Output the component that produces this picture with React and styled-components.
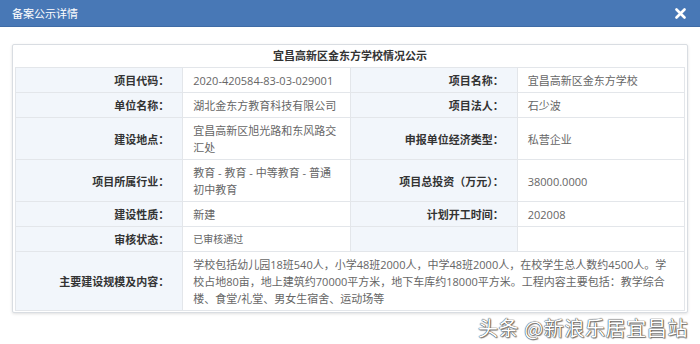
import React from "react";
import styled, { createGlobalStyle } from "styled-components";

const rows = [
  [
    { label: "项目代码：", value: "2020-420584-83-03-029001" },
    { label: "项目名称：", value: "宜昌高新区金东方学校" },
  ],
  [
    { label: "单位名称：", value: "湖北金东方教育科技有限公司" },
    { label: "项目法人：", value: "石少波" },
  ],
  [
    { label: "建设地点：", value: "宜昌高新区旭光路和东风路交汇处" },
    { label: "申报单位经济类型：", value: "私营企业" },
  ],
  [
    { label: "项目所属行业：", value: "教育 - 教育 - 中等教育 - 普通初中教育" },
    { label: "项目总投资（万元）：", value: "38000.0000" },
  ],
  [
    { label: "建设性质：", value: "新建" },
    { label: "计划开工时间：", value: "202008" },
  ],
  [
    { label: "审核状态：", value: "已审核通过", small: true },
    { label: "", value: "" },
  ],
];

const scope =
  "学校包括幼儿园18班540人，小学48班2000人，中学48班2000人，在校学生总人数约4500人。学校占地80亩，地上建筑约70000平方米，地下车库约18000平方米。工程内容主要包括：教学综合楼、食堂/礼堂、男女生宿舍、运动场等";

export default function App() {
  return (
    <Page>
      <GlobalStyle />
      <TitleBar>
        <TitleText>备案公示详情</TitleText>
        <CloseButton>
          <svg width="11" height="11" viewBox="0 0 11 11">
            <path d="M1.5 1.5 L9.5 9.5 M9.5 1.5 L1.5 9.5" stroke="#fff" strokeWidth="2.6" strokeLinecap="round" />
          </svg>
        </CloseButton>
      </TitleBar>
      <Body>
        <Panel>
          <PanelTitle>宜昌高新区金东方学校情况公示</PanelTitle>
          <InfoTable>
            <colgroup>
              <col style={{ width: "25%" }} />
              <col style={{ width: "25%" }} />
              <col style={{ width: "25%" }} />
              <col style={{ width: "25%" }} />
            </colgroup>
            <tbody>
              {rows.map((row, i) => (
                <tr key={i}>
                  {row.map((cell, j) => (
                    <React.Fragment key={j}>
                      <LabelCell>{cell.label}</LabelCell>
                      <ValueCell $small={cell.small}>{cell.value}</ValueCell>
                    </React.Fragment>
                  ))}
                </tr>
              ))}
              <tr>
                <LabelCell>主要建设规模及内容：</LabelCell>
                <ValueCell colSpan={3}>{scope}</ValueCell>
              </tr>
            </tbody>
          </InfoTable>
        </Panel>
        <Watermark>头条 @新浪乐居宜昌站</Watermark>
      </Body>
    </Page>
  );
}

const GlobalStyle = createGlobalStyle`
  html, body {
    margin: 0;
    padding: 0;
    background: #fff;
  }
  body {
    font-family: "Open Sans", "Noto Sans CJK SC", sans-serif;
  }
`;

const Page = styled.div`
  width: 700px;
  height: 344px;
  overflow: hidden;
  background: #fff;
`;

const TitleBar = styled.div`
  height: 27px;
  background: #4878b6;
  display: flex;
  align-items: center;
  justify-content: space-between;
  padding: 0 14px 0 12px;
  box-sizing: border-box;
  border-bottom: 1px solid #3f6ca6;
`;

const TitleText = styled.span`
  color: #fff;
  font-size: 11px;
`;

const CloseButton = styled.span`
  display: flex;
  align-items: center;
`;

const Body = styled.div`
  position: relative;
  padding: 17px 12px 0 12px;
  height: 317px;
  box-sizing: border-box;
`;

const Panel = styled.div`
  border: 1px solid #d9dde2;
  border-radius: 2px;
  box-shadow: 0 1px 3px rgba(0, 0, 0, 0.12);
  padding: 0 2px 1px 2px;
  background: #fff;
`;

const PanelTitle = styled.div`
  height: 22px;
  line-height: 22px;
  text-align: center;
  font-size: 11px;
  font-weight: bold;
  color: #333;
  border-bottom: 1px solid #e3e6ea;
`;

const InfoTable = styled.table`
  width: 100%;
  border-collapse: collapse;
  table-layout: fixed;
  font-size: 11px;
  line-height: 17px;

  td {
    border: 1px solid #e3e6ea;
    padding: 4px 10px 3px 10px;
    vertical-align: middle;
  }
  tr:first-child td {
    border-top: none;
  }
`;

const LabelCell = styled.td`
  background: #f2f6fb;
  color: #333;
  font-weight: bold;
  text-align: right;
  && {
    padding-right: 13px;
  }
`;

const ValueCell = styled.td`
  color: #666;
  font-size: ${(p) => (p.$small ? "10px" : "11px")};
  && {
    padding-right: 12px;
  }
`;

const Watermark = styled.div`
  position: absolute;
  right: 12px;
  bottom: 2px;
  font-family: "Noto Sans CJK SC", sans-serif;
  font-size: 20px;
  color: #fff;
  letter-spacing: 0.6px;
  text-shadow: 0 0 1px #333, 0 0 1px #333, 1px 1px 1px rgba(0, 0, 0, 0.5);
`;
